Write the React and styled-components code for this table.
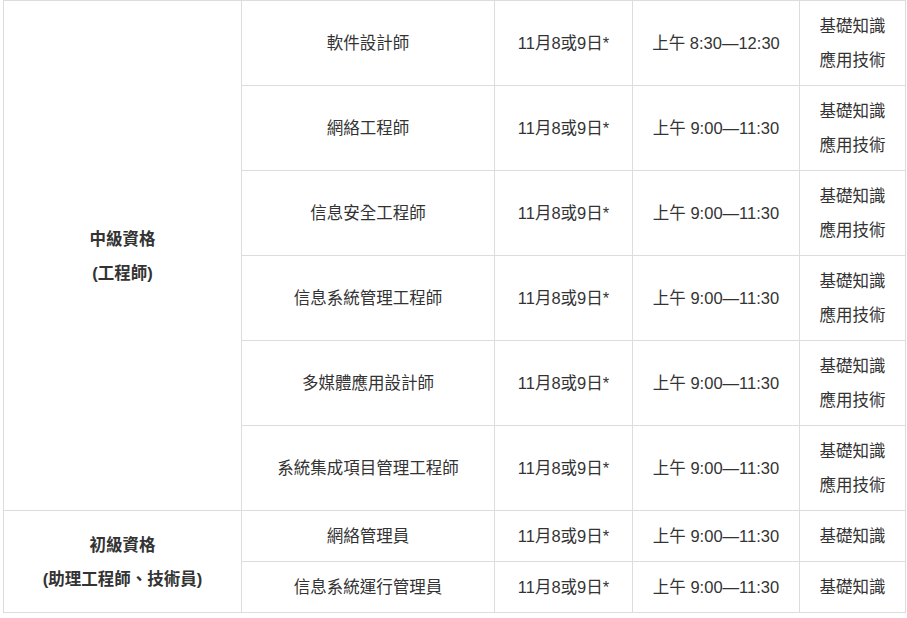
import React from 'react';
import styled, { createGlobalStyle } from 'styled-components';

const GlobalStyle = createGlobalStyle`
  html, body {
    margin: 0;
    padding: 0;
    background: #fff;
  }
  body {
    font-family: "Liberation Sans", "Noto Sans CJK TC", Arial, sans-serif;
    color: #333;
  }
`;

const Page = styled.div`
  padding: 0 0 0 3px;
`;

const Table = styled.table`
  width: 902px;
  table-layout: fixed;
  border-collapse: collapse;
  font-size: 16.5px;
  line-height: 34px;
`;

const Col = styled.col`
  width: ${({ $w }) => $w}px;
`;

const Cell = styled.td`
  border: 1px solid #dcdcdc;
  padding: 8px 2px;
  text-align: center;
  vertical-align: middle;
  font-weight: ${({ $bold }) => ($bold ? 700 : 400)};
  color: #333;
  white-space: nowrap;
`;

const colWidths = [238, 253, 138, 167, 106];

const groups = [
  {
    title: ['中級資格', '(工程師)'],
    rows: [
      ['軟件設計師', '上午 8:30—12:30', ['基礎知識', '應用技術']],
      ['網絡工程師', '上午 9:00—11:30', ['基礎知識', '應用技術']],
      ['信息安全工程師', '上午 9:00—11:30', ['基礎知識', '應用技術']],
      ['信息系統管理工程師', '上午 9:00—11:30', ['基礎知識', '應用技術']],
      ['多媒體應用設計師', '上午 9:00—11:30', ['基礎知識', '應用技術']],
      ['系統集成項目管理工程師', '上午 9:00—11:30', ['基礎知識', '應用技術']],
    ],
  },
  {
    title: ['初級資格', '(助理工程師、技術員)'],
    rows: [
      ['網絡管理員', '上午 9:00—11:30', ['基礎知識']],
      ['信息系統運行管理員', '上午 9:00—11:30', ['基礎知識']],
    ],
  },
];

const Lines = ({ items }) =>
  items.map((t, i) => (
    <React.Fragment key={i}>
      {i > 0 && <br />}
      {t}
    </React.Fragment>
  ));

const App = () => {
  return (
    <Page>
      <GlobalStyle />
      <Table>
        <colgroup>
          {colWidths.map((w, i) => (
            <Col key={i} $w={w} />
          ))}
        </colgroup>
        <tbody>
          {groups.map((g, gi) =>
            g.rows.map((r, ri) => (
              <tr key={`${gi}-${ri}`}>
                {ri === 0 && (
                  <Cell $bold rowSpan={g.rows.length}>
                    <Lines items={g.title} />
                  </Cell>
                )}
                <Cell>{r[0]}</Cell>
                <Cell>11月8或9日*</Cell>
                <Cell>{r[1]}</Cell>
                <Cell>
                  <Lines items={r[2]} />
                </Cell>
              </tr>
            ))
          )}
        </tbody>
      </Table>
    </Page>
  );
};

export default App;
